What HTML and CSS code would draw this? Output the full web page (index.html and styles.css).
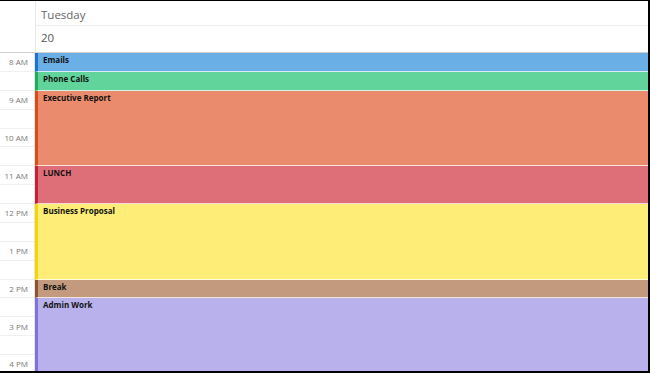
FILE: index.html
```html
<!DOCTYPE html>
<html>
<head>
<meta charset="utf-8">
<link rel="stylesheet" href="styles.css">
</head>
<body>
<div class="frame">
  <div class="header">
    <div class="corner"></div>
    <div class="dayhead">
      <div class="dayname">Tuesday</div>
      <div class="daynum">20</div>
    </div>
  </div>
  <div class="body">
    <div class="times">
      <div class="slot"><span>8 AM</span></div><div class="slot"></div>
      <div class="slot"><span>9 AM</span></div><div class="slot"></div>
      <div class="slot"><span>10 AM</span></div><div class="slot"></div>
      <div class="slot"><span>11 AM</span></div><div class="slot"></div>
      <div class="slot"><span>12 PM</span></div><div class="slot"></div>
      <div class="slot"><span>1 PM</span></div><div class="slot"></div>
      <div class="slot"><span>2 PM</span></div><div class="slot"></div>
      <div class="slot"><span>3 PM</span></div><div class="slot"></div>
      <div class="slot"><span>4 PM</span></div><div class="slot"></div>
    </div>
    <div class="day">
      <div class="ev s1 blue">Emails</div>
      <div class="ev s1 green">Phone Calls</div>
      <div class="ev s4 orange">Executive Report</div>
      <div class="ev s2 red">LUNCH</div>
      <div class="ev s4 yellow">Business Proposal</div>
      <div class="ev s1 brown">Break</div>
      <div class="ev rest purple">Admin Work</div>
    </div>
  </div>
</div>
</body>
</html>
```
FILE: styles.css
```css
* { box-sizing: border-box; }
html, body { margin: 0; padding: 0; background: #fff; }
body { font-family: "Open Sans", "Liberation Sans", sans-serif; }
.frame {
  width: 650px;
  height: 373px;
  border-top: 1px solid #000;
  border-right: 2px solid #000;
  border-bottom: 2px solid #000;
  display: flex;
  flex-direction: column;
  overflow: hidden;
}
.header {
  display: grid;
  grid-template-columns: 35px 1fr;
  height: 52px;
  border-bottom: 1px solid #d4d0cc;
  flex: none;
}
.dayhead {
  border-left: 1px solid #e6e6e6;
  display: flex;
  flex-direction: column;
}
.dayname {
  height: 25px;
  border-bottom: 1px solid #efefef;
  font-size: 11.5px;
  color: #666;
  padding-left: 5px;
  padding-top: 6px;
}
.daynum {
  flex: 1;
  font-size: 11.5px;
  color: #555;
  padding-left: 5px;
  padding-top: 4px;
}
.body {
  display: grid;
  grid-template-columns: 35px 1fr;
  flex: 1;
  min-height: 0;
}
.times {
  border-right: 1px solid #e3e3e3;
}
.slot {
  height: 18.875px;
  border-bottom: 1px solid #efefef;
  display: flex;
  align-items: center;
  justify-content: flex-end;
  padding-right: 6px;
  font-size: 8px;
  color: #777;
}
.day {
  display: flex;
  flex-direction: column;
}
.ev {
  border-bottom: 1px solid rgba(255,255,255,0.75);
  border-left: 3px solid;
  padding: 1px 0 0 5px;
  font-size: 8px;
  font-weight: 700;
  color: #111;
  line-height: 11px;
  flex: none;
}
.s1 { height: 18.875px; }
.s2 { height: 37.75px; }
.s4 { height: 75.5px; }
.rest { flex: 1; border-bottom: 0; }
.blue { background: #6aafe6; border-left-color: #1b75d0; }
.green { background: #60d49a; border-left-color: #1fae5b; }
.orange { background: #eb8b6d; border-left-color: #d94c14; }
.red { background: #de6f79; border-left-color: #c71f36; }
.yellow { background: #feed77; border-left-color: #f4d700; }
.brown { background: #c39a7e; border-left-color: #8a5432; }
.purple { background: #b8b1ec; border-left-color: #7e70df; }
```
